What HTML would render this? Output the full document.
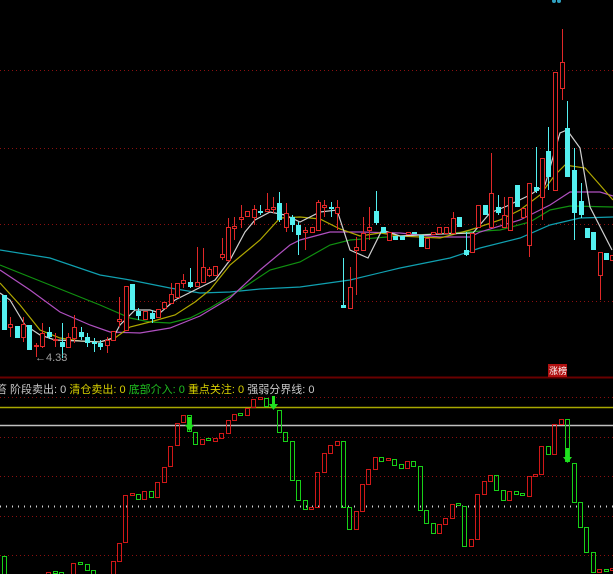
<!DOCTYPE html>
<html><head><meta charset="utf-8"><style>
html,body{margin:0;padding:0;background:#000;width:613px;height:574px;overflow:hidden}
svg{position:absolute;left:0;top:0}
.t{position:absolute;top:381px;left:-4px;font:11px "Liberation Sans","Noto Sans CJK SC",sans-serif;white-space:nowrap;color:#c8c8c8}
</style></head><body>
<svg id="s" width="613" height="574" xmlns="http://www.w3.org/2000/svg">
<g stroke="#8a1010" stroke-width="1" stroke-dasharray="1,3">
<line x1="0" y1="70.5" x2="613" y2="70.5"/><line x1="0" y1="148.5" x2="613" y2="148.5"/>
<line x1="0" y1="224.5" x2="613" y2="224.5"/><line x1="0" y1="301.5" x2="613" y2="301.5"/>
<line x1="0" y1="397.5" x2="613" y2="397.5"/><line x1="0" y1="437.5" x2="613" y2="437.5"/>
<line x1="0" y1="476.5" x2="613" y2="476.5"/><line x1="0" y1="516.5" x2="613" y2="516.5"/>
<line x1="0" y1="555.5" x2="613" y2="555.5"/>
</g>
<line x1="0" y1="377.5" x2="613" y2="377.5" stroke="#6a0000" stroke-width="2"/>
<line x1="0" y1="407.5" x2="613" y2="407.5" stroke="#a8a800" stroke-width="1.5"/>
<line x1="0" y1="425.5" x2="613" y2="425.5" stroke="#c0c0c0" stroke-width="1.5"/>
<line x1="0" y1="506.5" x2="613" y2="506.5" stroke="#d0d0d0" stroke-width="2" stroke-dasharray="1,5"/>
<g fill="none" stroke-width="1.2">
<polyline stroke="#10a0b0" points="0,250 50,258 100,275 130,280 170,288 200,293 230,292 260,289 300,287 350,280 400,268 450,258 480,248 520,238 550,225 580,218 613,217"/>
<polyline stroke="#109010" points="0,265 50,285 100,305 130,318 150,322 170,323 190,318 210,308 240,290 270,270 300,262 330,245 350,240 400,236 450,233 500,230 530,222 550,210 570,206 613,207"/>
<polyline stroke="#b050c0" points="0,270 30,290 60,312 90,325 110,332 140,333 170,328 200,316 230,298 260,270 290,245 300,240 330,232 360,232 400,233 440,237 470,237 480,232 520,220 550,205 570,192 600,192 613,196"/>
<polyline stroke="#b0a800" points="0,283 20,305 40,330 60,338 80,341 100,342 115,338 130,327 150,322 175,315 195,302 210,290 230,265 260,240 280,218 300,217 320,219 340,229 360,236 380,233 400,236 440,238 470,230 500,220 520,210 540,195 555,175 565,165 585,168 600,185 613,200"/>
<polyline stroke="#d0d0d0" points="0,293 10,300 25,325 40,335 55,340 80,341 100,342 113,338 120,325 135,310 150,310 160,313 175,300 195,290 215,280 230,260 245,232 255,220 270,212 285,215 300,222 320,212 337,210 350,250 368,258 382,230 400,236 440,234 473,233 490,213 507,206 530,195 545,185 560,133 567,130 580,148 590,207 612,250"/>
</g>
<g id="c"></g>
<text x="35" y="361" fill="#a0a0a0" font-family="Liberation Sans" font-size="11">←4.33</text>
<rect x="548" y="364" width="19" height="13" fill="#b01010"/>
<text x="549" y="374" fill="#fff" font-family="Liberation Sans,Noto Sans CJK SC,sans-serif" font-size="9">涨榜</text>
<circle cx="554" cy="1" r="2" fill="#30a0c0"/><circle cx="559" cy="1" r="2" fill="#30a0c0"/>
</svg>
<div class="t">笞 阶段卖出: 0 <span style="color:#d8d000">清仓卖出: 0</span> <span style="color:#20c020">底部介入: 0</span> <span style="color:#d8d000">重点关注: 0</span> 强弱分界线: 0</div>
<script>
var T=[[4,295,330,0,0,'c'],[10,324,327,317,337,'r'],[17,326,338,0,0,'c'],[23,324,337,317,342,'r'],[29,325,350,0,0,'c'],[36,345,346,343,357,'r'],[42,333,346,323,348,'r'],[49,332,337,327,339,'c'],[55,339,340,333,347,'r'],[62,342,347,323,358,'c'],[68,337,347,333,348,'r'],[74,327,338,315,343,'r'],[81,332,337,327,340,'c'],[87,337,343,333,347,'c'],[94,342,344,338,352,'c'],[100,343,347,340,350,'c'],[107,340,345,337,353,'r'],[113,331,340,0,0,'r'],[119,319,321,297,327,'r'],[126,286,330,0,0,'r'],[132,284,310,0,0,'c'],[138,311,316,308,320,'c'],[145,311,319,0,0,'r'],[152,313,319,310,323,'c'],[158,309,317,0,0,'r'],[164,302,308,0,0,'r'],[171,294,303,283,304,'r'],[177,283,297,0,0,'r'],[183,280,283,274,288,'r'],[190,282,287,268,288,'c'],[197,282,286,247,287,'r'],[203,267,282,248,283,'r'],[209,269,275,267,277,'r'],[215,266,275,0,0,'r'],[222,254,257,238,260,'r'],[228,227,260,218,262,'r'],[234,226,228,217,240,'r'],[241,217,219,205,228,'r'],[247,211,216,0,0,'r'],[254,209,217,205,225,'r'],[260,211,213,205,215,'c'],[267,209,211,193,212,'r'],[273,207,209,197,213,'r'],[279,203,220,192,222,'c'],[286,213,227,203,232,'r'],[292,217,225,215,232,'c'],[298,225,235,222,255,'c'],[305,230,232,227,250,'r'],[312,227,232,0,0,'r'],[318,202,230,200,231,'r'],[324,205,207,200,217,'r'],[331,207,209,202,217,'c'],[337,207,213,200,230,'r'],[343,305,308,258,308,'c'],[350,287,308,267,309,'r'],[356,247,250,237,295,'r'],[363,233,250,217,251,'r'],[369,227,230,207,240,'r'],[376,211,223,191,225,'c'],[383,227,233,0,0,'c'],[389,232,240,0,0,'r'],[395,236,240,0,0,'c'],[402,236,240,0,0,'c'],[408,232,234,0,0,'r'],[414,232,234,0,0,'c'],[421,235,247,0,0,'c'],[427,238,248,0,0,'r'],[433,232,234,0,0,'r'],[439,227,233,0,0,'r'],[446,227,233,0,0,'r'],[453,218,233,212,234,'r'],[459,217,227,0,0,'c'],[466,250,255,232,256,'c'],[472,233,252,0,0,'r'],[478,205,227,0,0,'r'],[485,205,215,0,0,'c'],[491,193,227,153,228,'r'],[498,207,213,195,215,'c'],[504,215,227,197,228,'r'],[510,197,230,0,0,'r'],[517,185,207,0,0,'c'],[523,208,217,0,0,'r'],[529,183,245,0,257,'r'],[536,187,191,147,193,'c'],[542,158,197,0,220,'r'],[548,151,177,127,190,'c'],[555,72,190,0,0,'r'],[562,62,88,29,100,'r'],[567,128,177,101,0,'c'],[574,170,213,148,240,'c'],[581,201,215,183,218,'c'],[587,228,238,0,0,'c'],[593,232,250,0,0,'c'],[600,252,275,0,300,'r'],[606,253,260,0,0,'c'],[612,255,260,0,0,'r']];
var B=[[4,556,574,'g'],[48,572,574,'r'],[55,571,573,'g'],[61,572,574,'g'],[73,563,574,'r'],[80,562,564,'g'],[87,564,570,'g'],[93,570,574,'g'],[113,561,574,'r'],[119,543,561,'r'],[125,495,542,'r'],[132,493,495,'r'],[138,494,499,'g'],[144,491,499,'r'],[151,491,497,'g'],[157,482,497,'r'],[164,467,482,'r'],[170,446,466,'r'],[177,423,445,'r'],[183,415,422,'r'],[189,415,431,'g'],[195,432,444,'g'],[202,439,444,'r'],[208,438,440,'g'],[215,438,441,'r'],[221,433,438,'r'],[228,420,433,'r'],[234,414,420,'r'],[240,413,415,'g'],[247,408,415,'r'],[253,399,407,'r'],[260,397,399,'r'],[266,398,406,'g'],[279,410,432,'g'],[285,432,441,'g'],[292,441,480,'g'],[298,480,500,'g'],[305,500,509,'g'],[311,507,509,'r'],[317,472,507,'r'],[324,453,472,'r'],[330,445,453,'r'],[337,441,445,'r'],[343,441,507,'g'],[349,507,529,'g'],[356,511,529,'r'],[362,484,511,'r'],[368,469,484,'r'],[375,457,469,'r'],[381,457,461,'g'],[388,458,460,'r'],[394,459,465,'g'],[401,464,468,'g'],[407,461,468,'r'],[413,461,466,'g'],[420,466,510,'g'],[426,510,523,'g'],[433,523,533,'g'],[439,524,533,'r'],[445,518,524,'r'],[452,504,518,'r'],[458,503,505,'g'],[464,506,546,'g'],[471,539,546,'r'],[477,494,539,'r'],[484,481,494,'r'],[490,475,481,'r'],[496,475,490,'g'],[503,490,500,'g'],[509,491,500,'r'],[516,491,494,'g'],[522,493,495,'g'],[529,476,496,'r'],[535,474,476,'r'],[541,446,474,'r'],[548,446,454,'g'],[554,424,454,'r'],[561,419,424,'r'],[567,419,461,'g'],[574,463,502,'g'],[580,502,527,'g'],[586,527,552,'g'],[593,552,572,'g'],[599,569,572,'r'],[606,569,571,'g'],[612,568,570,'r']];
var h='';
T.forEach(function(d){var x=d[0],t=d[1],b=d[2],wt=d[3]||t,wb=d[4]||b;
var col=d[5]=='c'?'#54f0f0':'#e02828';
h+='<line x1="'+(x+.5)+'" y1="'+wt+'" x2="'+(x+.5)+'" y2="'+wb+'" stroke="'+col+'"/>';
if(d[5]=='c')h+='<rect x="'+(x-2)+'" y="'+t+'" width="5" height="'+Math.max(2,b-t)+'" fill="'+col+'"/>';
else h+='<rect x="'+(x-1.5)+'" y="'+(t+.5)+'" width="4" height="'+Math.max(1,b-t)+'" fill="#000" stroke="'+col+'"/>';});
B.forEach(function(d){var col=d[3]=='g'?'#18d018':'#d01818';
h+='<rect x="'+(d[0]-1.5)+'" y="'+(d[1]+.5)+'" width="4" height="'+Math.max(1,d[2]-d[1])+'" fill="none" stroke="'+col+'"/>';});
function arr(x,y1,y2){h+='<rect x="'+(x-1)+'" y="'+y1+'" width="3" height="'+(y2-y1-5)+'" fill="#20e020"/><polygon points="'+(x-4)+','+(y2-6)+' '+(x+5)+','+(y2-6)+' '+(x+.5)+','+y2+'" fill="#20e020"/>';}
arr(189,417,431);arr(273,396,410);arr(567,448,463);
document.getElementById('c').innerHTML=h;
</script>
</body></html>
